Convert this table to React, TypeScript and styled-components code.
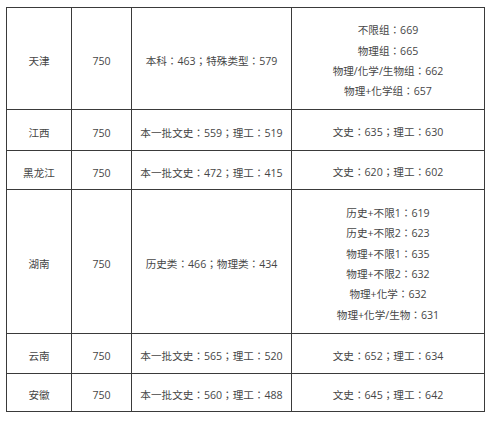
import React from "react";
import styled, { createGlobalStyle } from "styled-components";

const GlobalStyle = createGlobalStyle`
    html, body {
        margin: 0;
        padding: 0;
        background: #fff;
    }
`;

const Page = styled.div`
    padding: 7px 0 0 6px;
`;

const ScoreTable = styled.table`
    border-collapse: collapse;
    table-layout: fixed;
    width: 478px;
    font-family: "Open Sans", "Noto Sans CJK TC", sans-serif;
    font-size: 10.6px;
    color: #464646;
`;

const Col = styled.col<{ $w: number }>`
    width: ${(p) => p.$w}px;
`;

const Cell = styled.td<{ $h: number }>`
    border: 1px solid #3a3a3a;
    text-align: center;
    vertical-align: middle;
    height: ${(p) => p.$h - 1}px;
    padding: 5px 2px 0;
    box-sizing: border-box;
    line-height: 20px;
    white-space: nowrap;
`;

const Line = styled.div`
    line-height: 20.3px;
`;

type Row = {
    province: string;
    total: string;
    base: string;
    lines: string[];
    h: number;
};

const widths = [65, 60, 160, 193];

const rows: Row[] = [
    {
        province: "天津",
        total: "750",
        base: "本科：463；特殊类型：579",
        lines: ["不限组：669", "物理组：665", "物理/化学/生物组：662", "物理+化学组：657"],
        h: 103,
    },
    {
        province: "江西",
        total: "750",
        base: "本一批文史：559；理工：519",
        lines: ["文史：635；理工：630"],
        h: 42,
    },
    {
        province: "黑龙江",
        total: "750",
        base: "本一批文史：472；理工：415",
        lines: ["文史：620；理工：602"],
        h: 40,
    },
    {
        province: "湖南",
        total: "750",
        base: "历史类：466；物理类：434",
        lines: [
            "历史+不限1：619",
            "历史+不限2：623",
            "物理+不限1：635",
            "物理+不限2：632",
            "物理+化学：632",
            "物理+化学/生物：631",
        ],
        h: 145,
    },
    {
        province: "云南",
        total: "750",
        base: "本一批文史：565；理工：520",
        lines: ["文史：652；理工：634"],
        h: 41,
    },
    {
        province: "安徽",
        total: "750",
        base: "本一批文史：560；理工：488",
        lines: ["文史：645；理工：642"],
        h: 39,
    },
];

const App: React.FC = () => {
    return (
        <Page>
            <GlobalStyle />
            <ScoreTable>
                <colgroup>
                    {widths.map((w, i) => (
                        <Col key={i} $w={w} />
                    ))}
                </colgroup>
                <tbody>
                    {rows.map((r) => (
                        <tr key={r.province}>
                            <Cell $h={r.h}>{r.province}</Cell>
                            <Cell $h={r.h}>{r.total}</Cell>
                            <Cell $h={r.h}>{r.base}</Cell>
                            <Cell $h={r.h}>
                                {r.lines.map((l) => (
                                    <Line key={l}>{l}</Line>
                                ))}
                            </Cell>
                        </tr>
                    ))}
                </tbody>
            </ScoreTable>
        </Page>
    );
};

export default App;
